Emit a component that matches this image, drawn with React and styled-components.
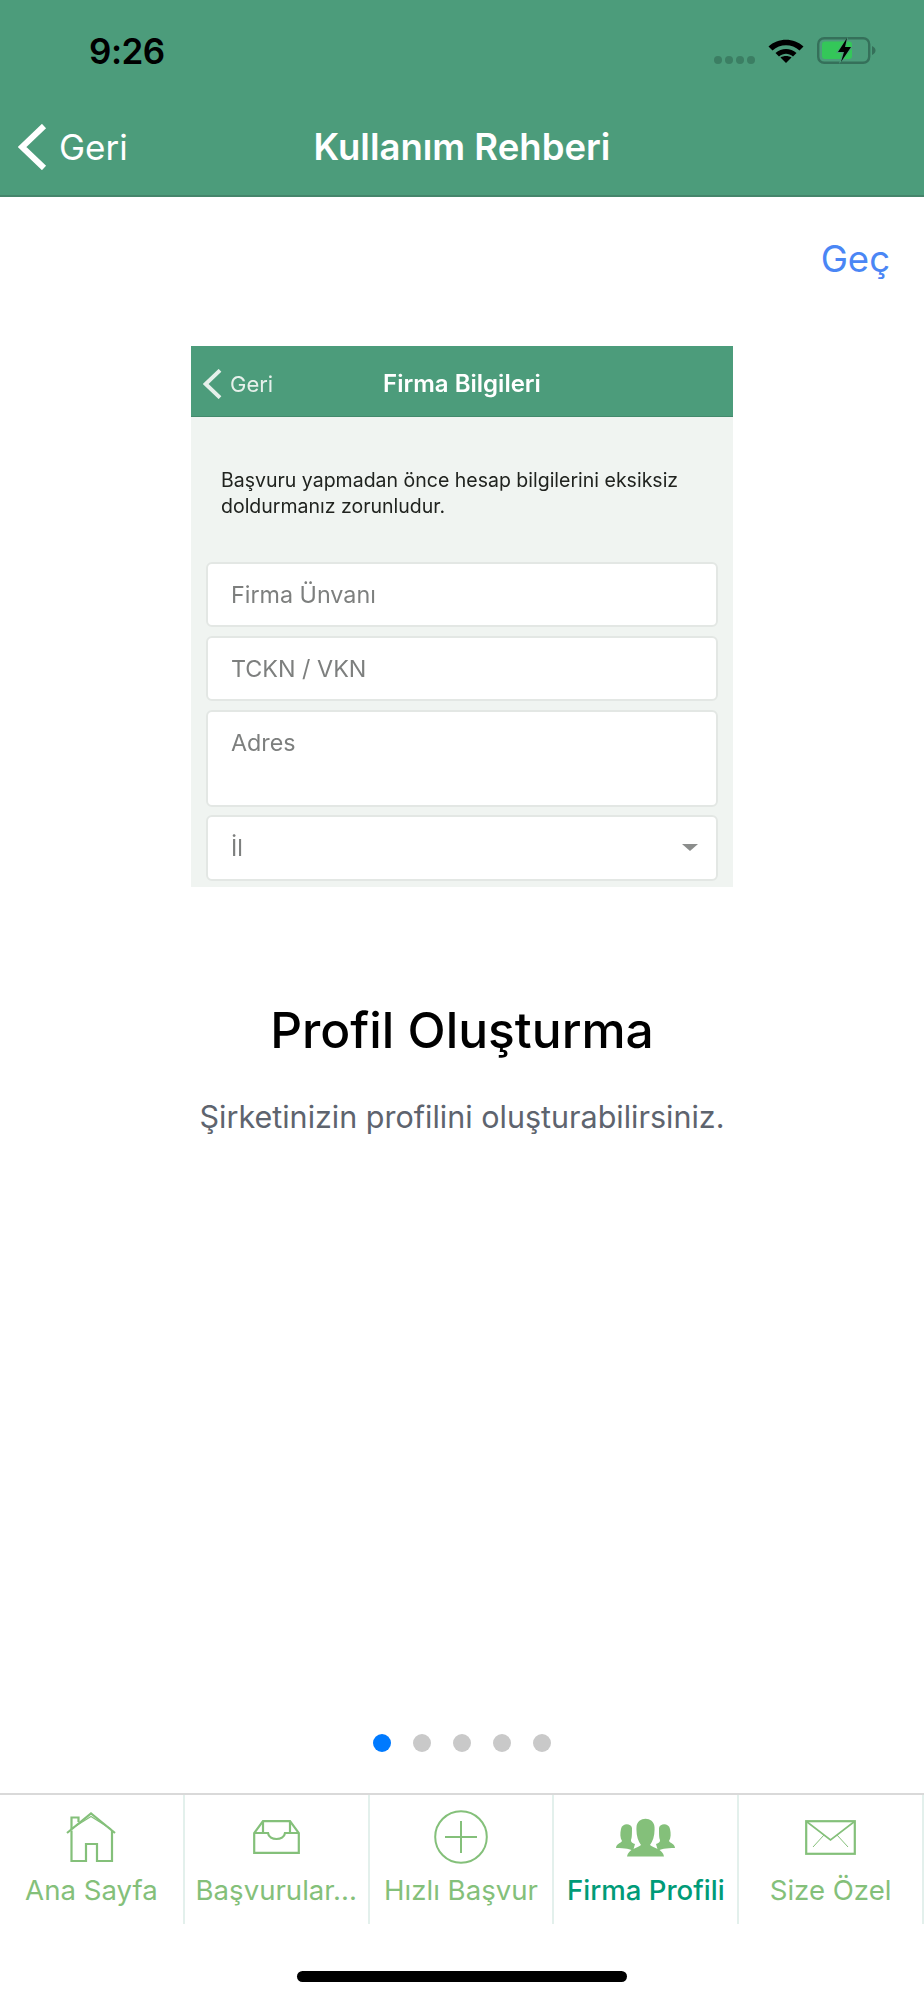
import React from "react"
import styled, { createGlobalStyle } from "styled-components"

const GlobalStyle = createGlobalStyle`
  html, body {
    margin: 0;
    padding: 0;
    background: #fff;
    font-family: Inter, "Liberation Sans", sans-serif;
  }
`

const Page = styled.div`
  width: 924px;
  height: 2000px;
  display: flex;
  flex-direction: column;
  background: #fff;
  overflow: hidden;
`

const Header = styled.header`
  flex: none;
  height: 195px;
  background: #4c9c7b;
  border-bottom: 2px solid #45856b;
  display: flex;
  flex-direction: column;
`

const StatusBar = styled.div`
  height: 100px;
  box-sizing: border-box;
  display: flex;
  align-items: center;
  padding: 0 48px 0 89px;
`

const Clock = styled.span`
  margin-top: 2px;
  font-size: 35px;
  font-weight: 600;
  letter-spacing: -0.5px;
  color: #000;
  line-height: 1;
`

const StatusIcons = styled.div`
  margin-left: auto;
  display: flex;
  align-items: center;
  gap: 13px;
`

const SignalDots = styled.div`
  display: flex;
  gap: 3px;
  padding-top: 19px;
`

const SignalDot = styled.span`
  width: 8px;
  height: 8px;
  border-radius: 50%;
  background: #3b7e63;
`

const NavBar = styled.div`
  height: 95px;
  box-sizing: border-box;
  display: grid;
  grid-template-columns: 1fr auto 1fr;
  align-items: center;
  padding: 0 0 1px 18px;
`

const BackLink = styled.div`
  display: flex;
  align-items: center;
  gap: 12px;
  color: #fff;
  font-size: 35px;
  font-weight: 400;
`

const NavTitle = styled.div`
  font-size: 36.5px;
  font-weight: 600;
  color: #fff;
  margin-left: -18px;
`

const Main = styled.main`
  flex: 1;
  display: flex;
  flex-direction: column;
  align-items: center;
`

const SkipRow = styled.div`
  align-self: stretch;
  display: flex;
  justify-content: flex-end;
  padding: 42px 34px 0 0;
`

const SkipLink = styled.span`
  font-size: 36.5px;
  line-height: 40px;
  color: #4a86f5;
`

const Preview = styled.div`
  margin-top: 67px;
  width: 542px;
  height: 541px;
  background: #f0f4f1;
  display: flex;
  flex-direction: column;
  overflow: hidden;
  filter: blur(0.4px);
`

const PreviewBar = styled.div`
  height: 71px;
  box-sizing: border-box;
  flex: none;
  background: #4c9c7b;
  border-bottom: 1px solid #43896c;
  display: grid;
  grid-template-columns: 1fr auto 1fr;
  align-items: center;
  padding: 5px 0 0 12px;
`

const PreviewBack = styled.div`
  display: flex;
  align-items: center;
  gap: 8px;
  color: #e6f0eb;
  font-size: 22px;
`

const PreviewTitle = styled.div`
  color: #fff;
  font-size: 24px;
  font-weight: 600;
  margin-left: -12px;
`

const Notice = styled.p`
  margin: 51px 0 0;
  padding: 0 10px 0 30px;
  font-size: 19.5px;
  line-height: 25.5px;
  color: #20231f;
`

const Fields = styled.div`
  margin-top: 42.5px;
  padding: 0 15px 0 15px;
  display: flex;
  flex-direction: column;
  gap: 8.5px;
`

const Field = styled.div`
  height: ${(p) => (p.$tall ? 97 : 65.5)}px;
  box-sizing: border-box;
  flex: none;
  background: #fff;
  border: 2px solid #e3e7e4;
  border-radius: 6px;
  padding: ${(p) => (p.$tall ? "16px" : "0")} 18px 0 23px;
  display: flex;
  align-items: ${(p) => (p.$tall ? "flex-start" : "center")};
  justify-content: space-between;
  font-size: 23.3px;
  color: #7d7f7e;
`

const Caret = styled.span`
  width: 0;
  height: 0;
  border-left: 8px solid transparent;
  border-right: 8px solid transparent;
  border-top: 7px solid #8b8d8c;
`

const SlideTitle = styled.h1`
  margin: 113px 0 0;
  font-size: 49.7px;
  line-height: 60px;
  font-weight: 500;
  color: #000;
`

const SlideText = styled.p`
  margin: 39px 0 0;
  font-size: 30.5px;
  line-height: 36px;
  color: #5e646e;
`

const Pager = styled.div`
  margin-top: auto;
  margin-bottom: 41px;
  display: flex;
  gap: 22px;
`

const PagerDot = styled.span`
  width: 18px;
  height: 18px;
  border-radius: 50%;
  background: ${(p) => (p.$active ? "#007aff" : "#c9c9c9")};
`

const TabBar = styled.nav`
  flex: none;
  height: 131px;
  box-sizing: border-box;
  border-top: 2px solid #d9d9d9;
  display: grid;
  grid-template-columns: repeat(5, 1fr);
`

const Tab = styled.div`
  border-right: 2px solid #e3f0ec;
  display: flex;
  flex-direction: column;
  align-items: center;
  color: ${(p) => (p.$active ? "#009b78" : "#84c07a")};
  font-size: 27.6px;
  font-weight: ${(p) => (p.$active ? 500 : 400)};
  white-space: nowrap;
`

const TabIcon = styled.div`
  height: 72px;
  margin-top: 6px;
  display: flex;
  align-items: center;
  justify-content: center;
  color: #84c07a;
`

const HomeArea = styled.div`
  flex: none;
  height: 76px;
  display: flex;
  justify-content: center;
  padding-top: 47px;
  box-sizing: border-box;
`

const HomeIndicator = styled.div`
  width: 330px;
  height: 11px;
  border-radius: 6px;
  background: #000;
`

const Chevron = ({ width, height, stroke }) => (
  <svg width={width} height={height} viewBox="0 0 29 46" fill="none">
    <path d="M26 2 L4 23 L26 44" stroke="currentColor" strokeWidth={stroke} />
  </svg>
)

const WifiIcon = () => (
  <svg width="36" height="26" viewBox="0 0 36 26">
    <path d="M0.5 9.5 C10 0.5 26 0.5 35.5 9.5 L31.5 13.5 C24 6.5 12 6.5 4.5 13.5 Z" fill="#000" />
    <path d="M7.5 16 C13.5 10.5 22.5 10.5 28.5 16 L25 19.5 C20.5 15.8 15.5 15.8 11 19.5 Z" fill="#000" />
    <path d="M12.5 20.5 C15.5 18.5 20.5 18.5 23.5 20.5 L18 26 Z" fill="#000" />
  </svg>
)

const BatteryIcon = () => (
  <svg width="59" height="27" viewBox="0 0 59 27">
    <rect x="1.2" y="1.2" width="51" height="24.6" rx="6" fill="none" stroke="#35705a" strokeWidth="2.4" />
    <rect x="5" y="4.5" width="30" height="17.5" rx="3" fill="#34c759" />
    <path d="M55 9 C57.5 10 58.5 12 58.5 13.5 C58.5 15 57.5 17 55 18 Z" fill="#35705a" />
    <path d="M31 0 L19 16 H25 L22 27 L36 10 H29 L31 0 Z" fill="#4c9c7b" />
    <path d="M30 1 L21 15 H27 L24 25 L34 10 H28 Z" fill="#000" />
  </svg>
)

const HomeIcon = () => (
  <svg width="50" height="50" viewBox="0 0 50 50" fill="none" stroke="currentColor" strokeWidth="2.2">
    <path d="M1 21 L25 1.5 L49 21" />
    <path d="M5 17 L25 4.5 L45 17" strokeWidth="1.2" />
    <path d="M5.5 18.5 V49 H20 V32 H31 V49 H46 V18.5" />
    <path d="M5.5 17 V5.5 H12.5 V10" />
  </svg>
)

const TrayIcon = () => (
  <svg width="47" height="34" viewBox="0 0 47 34" fill="none" stroke="currentColor" strokeWidth="2.2">
    <path d="M1.2 13 V32.8 H45.8 V13 L37 1.2 H10 Z" />
    <path d="M10 1.2 V13 M37 1.2 V13" />
    <path d="M1.2 13 H15 C16 21 31 21 32 13 H45.8" />
  </svg>
)

const PlusIcon = () => (
  <svg width="54" height="54" viewBox="0 0 54 54" fill="none" stroke="currentColor" strokeWidth="2">
    <circle cx="27" cy="27" r="25.8" />
    <path d="M11 27 H43 M27 11 V43" />
  </svg>
)

const PeopleIcon = () => (
  <svg width="59" height="39" viewBox="0 0 59 39" fill="currentColor">
    <path d="M17 33 C15 31 9 30 0 30 C0 26 5 25 6 23 C4 20 4 15 5 11 C6 5 15 5 16 10 C16 15 16 20 15 22 C15 25 17 25 19 26 Z" />
    <path d="M42 33 C44 31 50 30 59 30 C59 26 54 25 53 23 C55 20 55 15 54 11 C53 5 44 5 43 10 C43 15 43 20 44 22 C44 25 42 25 40 26 Z" />
    <path d="M11 38.5 C12 31 22 30 25 27 C22 23 20 17 20.5 9 C21 -2 38 -2 38.5 9 C39 17 37 23 34 27 C37 30 47 31 48 38.5 Z" />
  </svg>
)

const MailIcon = () => (
  <svg width="51" height="35" viewBox="0 0 51 35" fill="none" stroke="currentColor">
    <rect x="1.2" y="1.2" width="48.6" height="32.6" strokeWidth="2.2" />
    <path d="M1.5 1.5 L25.5 20 L49.5 1.5" strokeWidth="1.6" />
    <path d="M8 27 L19 15 M43 27 L32 15" strokeWidth="1" />
  </svg>
)

const tabs = [
  { label: "Ana Sayfa", icon: <HomeIcon /> },
  { label: "Başvurular...", icon: <TrayIcon /> },
  { label: "Hızlı Başvur", icon: <PlusIcon /> },
  { label: "Firma Profili", icon: <PeopleIcon />, active: true },
  { label: "Size Özel", icon: <MailIcon /> },
]

export default function App() {
  return (
    <Page>
      <GlobalStyle />
      <Header>
        <StatusBar>
          <Clock>9:26</Clock>
          <StatusIcons>
            <SignalDots>
              {[0, 1, 2, 3].map((i) => (
                <SignalDot key={i} />
              ))}
            </SignalDots>
            <WifiIcon />
            <BatteryIcon />
          </StatusIcons>
        </StatusBar>
        <NavBar>
          <BackLink>
            <Chevron width={29} height={46} stroke={6} />
            Geri
          </BackLink>
          <NavTitle>Kullanım Rehberi</NavTitle>
        </NavBar>
      </Header>
      <Main>
        <SkipRow>
          <SkipLink>Geç</SkipLink>
        </SkipRow>
        <Preview>
          <PreviewBar>
            <PreviewBack>
              <Chevron width={19} height={30} stroke={6} />
              Geri
            </PreviewBack>
            <PreviewTitle>Firma Bilgileri</PreviewTitle>
          </PreviewBar>
          <Notice>
            Başvuru yapmadan önce hesap bilgilerini eksiksiz
            <br />
            doldurmanız zorunludur.
          </Notice>
          <Fields>
            <Field>Firma Ünvanı</Field>
            <Field>TCKN / VKN</Field>
            <Field $tall>Adres</Field>
            <Field>
              İl
              <Caret />
            </Field>
          </Fields>
        </Preview>
        <SlideTitle>Profil Oluşturma</SlideTitle>
        <SlideText>Şirketinizin profilini oluşturabilirsiniz.</SlideText>
        <Pager>
          {[0, 1, 2, 3, 4].map((i) => (
            <PagerDot key={i} $active={i === 0} />
          ))}
        </Pager>
      </Main>
      <TabBar>
        {tabs.map((tab) => (
          <Tab key={tab.label} $active={tab.active}>
            <TabIcon>{tab.icon}</TabIcon>
            {tab.label}
          </Tab>
        ))}
      </TabBar>
      <HomeArea>
        <HomeIndicator />
      </HomeArea>
    </Page>
  )
}
